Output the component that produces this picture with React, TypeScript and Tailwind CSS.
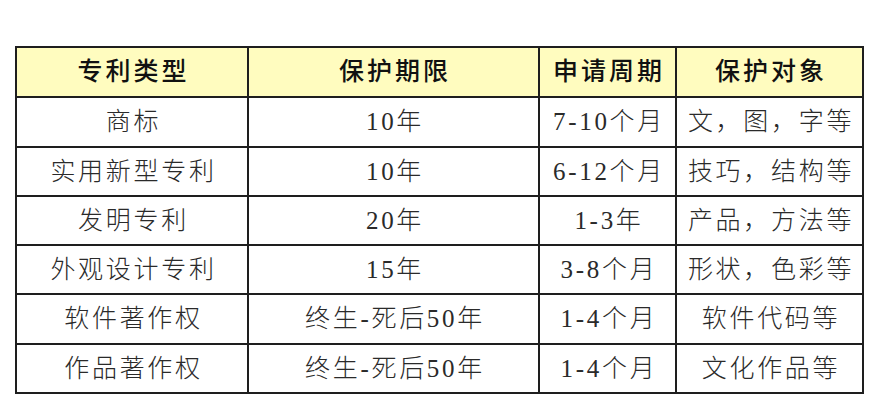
import React from "react";

const header = ["专利类型", "保护期限", "申请周期", "保护对象"];
const rows: string[][] = [
  ["商标", "10年", "7-10个月", "文，图，字等"],
  ["实用新型专利", "10年", "6-12个月", "技巧，结构等"],
  ["发明专利", "20年", "1-3年", "产品，方法等"],
  ["外观设计专利", "15年", "3-8个月", "形状，色彩等"],
  ["软件著作权", "终生-死后50年", "1-4个月", "软件代码等"],
  ["作品著作权", "终生-死后50年", "1-4个月", "文化作品等"],
];
const rowH = ["h-[48px]", "h-[48px]", "h-[47px]", "h-[47px]", "h-[47px]", "h-[48px]", "h-[47px]"];

export default function App() {
  return (
    <div className="w-[879px] h-[411px] bg-white overflow-hidden pt-[46px] pl-[15px]">
      <div
        className="grid w-[849px] p-[2px] gap-[2px] bg-[#1e1e1e] grid-cols-[230px_289px_135px_185px]"
        style={{ fontFamily: '"Liberation Serif", "Noto Sans CJK SC", serif' }}
      >
        {header.map((h) => (
          <div
            key={h}
            className={`${rowH[0]} bg-[#fffcbf] flex items-center justify-center text-[25px] font-medium text-[#111] tracking-[3px] pl-[3px]`}
          >
            {h}
          </div>
        ))}
        {rows.map((r, i) =>
          r.map((c, j) => (
            <div
              key={`${i}-${j}`}
              className={`${rowH[i + 1]} bg-white flex items-center justify-center text-[25px] font-light text-[#2a2a2a] tracking-[2.7px] pl-[3px]`}
            >
              {c}
            </div>
          ))
        )}
      </div>
    </div>
  );
}
